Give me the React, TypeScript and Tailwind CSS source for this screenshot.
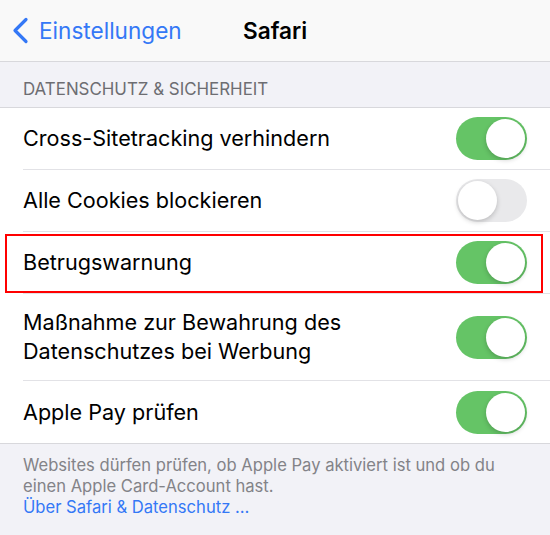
import type { ReactNode } from 'react'

const font = { fontFamily: 'Inter, "Noto Sans", sans-serif' }

function Toggle({ on }: { on: boolean }) {
  return (
    <div
      className={`relative h-[43px] w-[71px] shrink-0 rounded-full ${on ? 'bg-[#65c466]' : 'bg-[#e9e9eb]'}`}
    >
      <div
        className={`absolute top-[2px] h-[39px] w-[39px] rounded-full bg-white shadow-[0_2px_5px_rgba(0,0,0,0.2)] ${on ? 'right-[2px]' : 'left-[2px]'}`}
      />
    </div>
  )
}

function Row({ children, on, last, tall }: { children: ReactNode; on: boolean; last?: boolean; tall?: boolean }) {
  return (
    <div className="pl-[23px]">
      <div
        className={`flex items-center justify-between pr-[23px] ${tall ? 'h-[87px]' : 'h-[62px]'} ${last ? '' : 'border-b border-[#e2e2e6]'}`}
      >
        <div className="text-[21.6px] leading-[29px] text-black">{children}</div>
        <Toggle on={on} />
      </div>
    </div>
  )
}

export default function App() {
  return (
    <div className="h-[535px] w-[550px] overflow-hidden bg-[#f2f2f7]" style={font}>
      <header className="relative flex h-[62px] items-center border-b border-[#d8d8dc] bg-[#f9f9f9]">
        <div className="flex items-center pl-[12px] text-[#3478f6]">
          <svg width="17" height="27" viewBox="0 0 17 27" fill="none">
            <path d="M14 2.5L3 13.5L14 24.5" stroke="#3478f6" strokeWidth="3.2" strokeLinecap="round" strokeLinejoin="round" />
          </svg>
          <span className="ml-[10px] text-[22.6px]">Einstellungen</span>
        </div>
        <div className="absolute left-[243px] text-[22.6px] font-semibold text-black">Safari</div>
      </header>

      <div className="flex h-[45px] items-end pb-[5px] pl-[23px] text-[16.9px] text-[#6d6d72]">
        DATENSCHUTZ &amp; SICHERHEIT
      </div>

      <div className="border-y border-[#d8d8dc] bg-white">
        <Row on>Cross-Sitetracking verhindern</Row>
        <Row on={false}>Alle Cookies blockieren</Row>
        <div className="relative">
          <Row on>Betrugswarnung</Row>
          <div className="pointer-events-none absolute left-[5px] right-[7px] top-[2px] bottom-[1px] border-2 border-[#ff0000]" />
        </div>
        <Row on tall>
          Maßnahme zur Bewahrung des
          <br />
          Datenschutzes bei Werbung
        </Row>
        <Row on last>Apple Pay prüfen</Row>
      </div>

      <div className="w-[520px] pl-[23px] pt-[11px] text-[16.6px] leading-[21px] text-[#838388]">
        <p>Websites dürfen prüfen, ob Apple Pay aktiviert ist und ob du einen Apple Card-Account hast.</p>
        <p className="text-[#3478f6]">Über Safari &amp; Datenschutz …</p>
      </div>
    </div>
  )
}
